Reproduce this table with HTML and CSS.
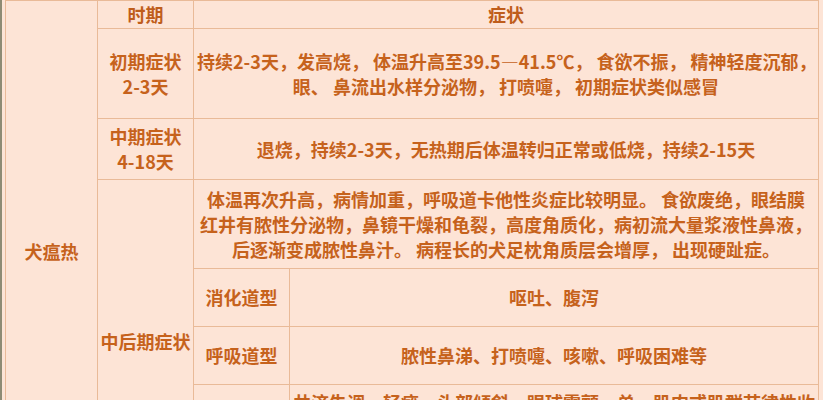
FILE: index.html
```html
<!DOCTYPE html>
<html lang="zh-CN">
<head>
<meta charset="utf-8">
<title>犬瘟热症状</title>
<link rel="stylesheet" href="styles.css">
</head>
<body>
<div class="page">
<table class="sym">
  <colgroup>
    <col class="c-dis">
    <col class="c-stage">
    <col class="c-type">
    <col class="c-desc">
  </colgroup>
  <tr class="r-head">
    <td rowspan="7" class="dis">犬瘟热</td>
    <th>时期</th>
    <th colspan="2">症状</th>
  </tr>
  <tr class="r-early">
    <td class="stage">初期症状<br>2-3天</td>
    <td colspan="2" class="nw">持续2-3天，发高烧， 体温升高至39.5—41.5℃， 食欲不振， 精神轻度沉郁，<br>眼、 鼻流出水样分泌物， 打喷嚏， 初期症状类似感冒</td>
  </tr>
  <tr class="r-mid">
    <td class="stage">中期症状<br>4-18天</td>
    <td colspan="2" class="nw">退烧，持续2-3天，无热期后体温转归正常或低烧，持续2-15天</td>
  </tr>
  <tr class="r-late">
    <td rowspan="4" class="stage">中后期症状</td>
    <td colspan="2" class="nw">体温再次升高，病情加重，呼吸道卡他性炎症比较明显。 食欲废绝，眼结膜<br>红井有脓性分泌物，鼻镜干燥和龟裂，高度角质化，病初流大量浆液性鼻液，<br>后逐渐变成脓性鼻汁。 病程长的犬足枕角质层会增厚， 出现硬趾症。</td>
  </tr>
  <tr class="r-type">
    <td>消化道型</td>
    <td>呕吐、腹泻</td>
  </tr>
  <tr class="r-type">
    <td>呼吸道型</td>
    <td>脓性鼻涕、打喷嚏、咳嗽、呼吸困难等</td>
  </tr>
  <tr class="r-nerve">
    <td>神经型</td>
    <td class="top">共济失调，轻瘫，头部倾斜，眼球震颤，单，肌肉或肌群节律性收缩，常见于颞肌和四肢肌肉，严重者出现癫痫样抽搐，口吐白沫，最后昏迷死亡。</td>
  </tr>
</table>
</div>
</body>
</html>
```

FILE: styles.css
```css
html, body {
  margin: 0;
  padding: 0;
  background: #fde4d6;
}

.page {
  border-left: 2px solid #8e8b74;
  padding-left: 3px;
  min-height: 400px;
  background: #fde4d6;
}

.sym {
  border-collapse: collapse;
  table-layout: fixed;
  width: 813px;
  color: #c6621c;
  font-family: "Noto Sans CJK SC", "Noto Sans", sans-serif;
  font-weight: 700;
  font-size: 18px;
  line-height: 25px;
  text-align: center;
}

.sym td,
.sym th {
  border: 1px solid #e9ba98;
  padding: 0 3px;
  vertical-align: middle;
  font-weight: 700;
}

.sym th {
  color: #bf5d1b;
}

.sym td.stage {
  padding: 0;
  white-space: nowrap;
}

.sym td.top {
  vertical-align: top;
  padding-top: 5px;
}

.c-dis { width: 92px; }
.c-stage { width: 96px; }
.c-type { width: 96px; }
.c-desc { width: 529px; }

.nw { white-space: nowrap; }

.r-head { height: 28px; }
.r-early { height: 90px; }
.r-mid { height: 61px; }
.r-late { height: 89px; }
.r-type { height: 58px; }
.r-nerve { height: 118px; }
```
